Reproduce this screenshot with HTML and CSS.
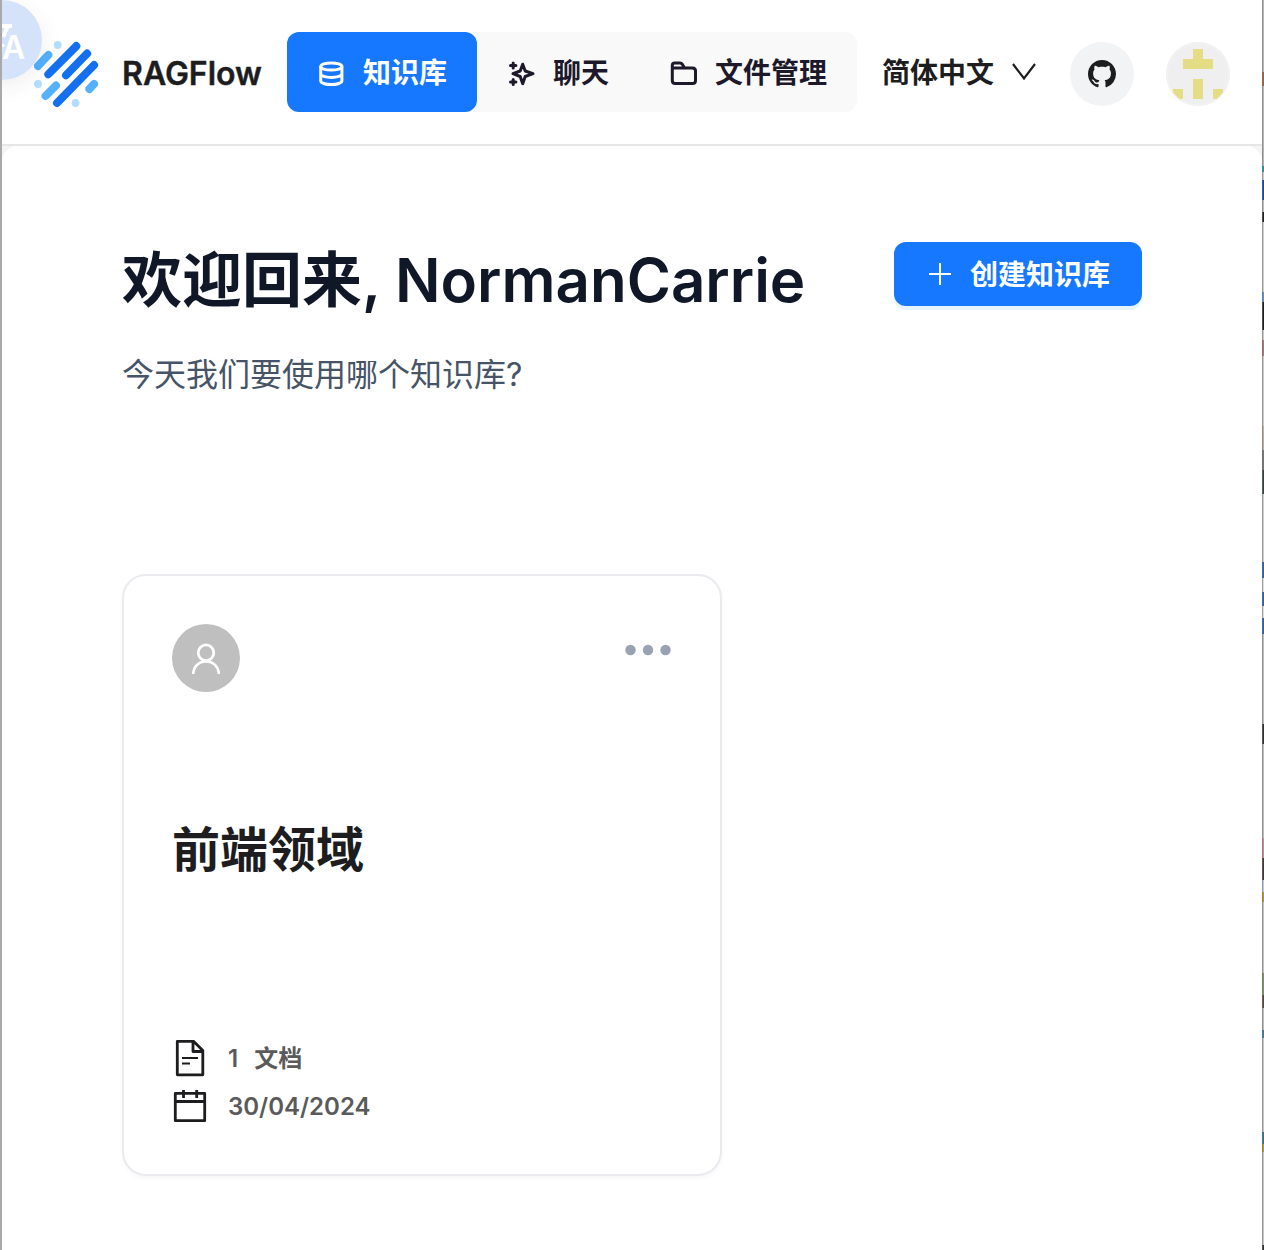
FILE: index.html
```html
<!DOCTYPE html>
<html lang="zh-CN">
<head>
<meta charset="utf-8">
<title>RAGFlow</title>
<link rel="stylesheet" href="styles.css">
</head>
<body>
<div class="window">
  <header class="header">
    <div class="brand">
      <svg class="logo" viewBox="34 40 66 68" fill="none" stroke-linecap="round" stroke-width="8">
        <g stroke="#1570ef"><path d="M48.3 74.3 76.3 46.1M66 75.3 87.1 53.5M57 103 94.1 65"/></g>
        <g stroke="#53b1fd"><path d="M38 66 48.3 55M45.500 96 56 85.500M89.400 89 94 84"/></g>
        <g fill="#b2ddff"><circle cx="57.700" cy="45" r="3.900"/><circle cx="38" cy="84" r="3.900"/><circle cx="75.600" cy="103" r="3.900"/></g>
      </svg>
      <span class="brand-name">RAGFlow</span>
    </div>
    <nav class="nav">
      <a class="nav-item nav-item-active">
        <svg class="nav-icon" viewBox="0 0 28 28" fill="none" stroke="currentColor" stroke-width="3"><ellipse cx="14.300" cy="6.500" rx="10.600" ry="3.600"/><path d="M3.700 6.500v14.200c0 2.200 4.800 3.900 10.600 3.900s10.600-1.700 10.600-3.900V6.500M3.700 13.700c0 2.200 4.800 3.800 10.600 3.800s10.600-1.600 10.600-3.800"/></svg>
        <span>知识库</span>
      </a>
      <a class="nav-item">
        <svg class="nav-icon" viewBox="0 0 28 28" fill="none" stroke="currentColor" stroke-width="3" stroke-linecap="round" stroke-linejoin="round"><path d="M15.700 4.200 18.200 11 26 13.700l-7.800 2.800-2.500 7.200-2.500-7.200-7.200-2.800 7.200-2.700zM6.200 3v5M3.500 5.500h5.400M6.200 19.500v5M3.500 22h5.400"/></svg>
        <span>聊天</span>
      </a>
      <a class="nav-item">
        <svg class="nav-icon" viewBox="0 0 28 28" fill="none" stroke="currentColor" stroke-width="3" stroke-linejoin="round"><path d="M3.300 8.200V5.500c0-1.500.9-2.400 2.400-2.400h5.200c1.200 0 2 .5 2.600 1.500l2 3.400h8c1.800 0 3 1.200 3 3v9.600c0 1.800-1.200 3-3 3H6.300c-1.800 0-3-1.200-3-3zM3.300 8h12"/></svg>
        <span>文件管理</span>
      </a>
    </nav>
    <div class="language">
      <span>简体中文</span>
      <svg class="chevron" viewBox="0 0 24 18" fill="none" stroke="currentColor" stroke-width="2.200"><path d="M1 1 12 15.500 23 1"/></svg>
    </div>
    <div class="round github">
      <svg class="github-icon" viewBox="0 0 16 16" fill="currentColor"><path d="M8 0C3.580 0 0 3.580 0 8c0 3.540 2.290 6.530 5.470 7.590.4.070.55-.17.55-.38 0-.19-.01-.82-.01-1.490-2.010.37-2.530-.49-2.690-.94-.09-.23-.48-.94-.82-1.130-.28-.15-.68-.52-.01-.53.63-.01 1.080.58 1.230.82.72 1.210 1.870.87 2.330.66.07-.52.28-.87.51-1.070-1.780-.2-3.640-.89-3.640-3.950 0-.87.31-1.590.82-2.150-.08-.2-.36-1.020.08-2.120 0 0 .67-.21 2.200.82.64-.18 1.320-.27 2-.27s1.360.09 2 .27c1.530-1.040 2.200-.82 2.200-.82.44 1.100.16 1.920.08 2.120.51.56.82 1.270.82 2.150 0 3.070-1.870 3.750-3.650 3.950.29.25.54.73.54 1.480 0 1.070-.01 1.930-.01 2.200 0 .21.15.46.55.38A8.010 8.010 0 0 0 16 8c0-4.420-3.580-8-8-8z"/></svg>
    </div>
    <div class="round avatar">
      <svg viewBox="0 0 64 64"><path fill="#e5dc86" d="M27 7h10v10h10v10H17V17h10zM27 37h10v20H27zM7 47h10v10H13.700A31 31 0 0 1 7 50.300zM47 47h10v3.300A31 31 0 0 1 50.300 57H47z"/></svg>
    </div>
  </header>
  <main class="main">
    <section class="page">
      <div class="intro">
        <div>
          <h1 class="title">欢迎回来, NormanCarrie</h1>
          <p class="subtitle">今天我们要使用哪个知识库?</p>
        </div>
        <button class="create">
          <svg class="plus" viewBox="0 0 24 24" stroke="currentColor" stroke-width="2"><path d="M12 1v22M1 12h22"/></svg>
          <span>创建知识库</span>
        </button>
      </div>
      <article class="card">
        <div class="card-top">
          <div class="user">
            <svg viewBox="0 0 34 34" fill="none" stroke="currentColor" stroke-width="2.700"><circle cx="17" cy="11.700" r="7.800"/><path d="M4.200 33c.3-7.500 5.600-12.600 12.800-12.600S29.500 25.500 29.800 33"/></svg>
          </div>
          <svg class="dots" viewBox="0 0 46 12" fill="#98a2b3"><circle cx="5.500" cy="6" r="5.200"/><circle cx="23" cy="6" r="5.200"/><circle cx="40.500" cy="6" r="5.200"/></svg>
        </div>
        <h2 class="card-title">前端领域</h2>
        <div class="meta">
          <div class="meta-row">
            <svg class="meta-icon" viewBox="0 0 36 40" fill="none" stroke="currentColor" stroke-width="2.800" stroke-linejoin="round"><path d="M5.300 3.300h16.200l9.300 9.300v24.200H5.300zM21 3.500V13.500h9.800"/><path d="M10 20h16M10 25.500h8" stroke-width="2.200"/></svg>
            <span>1</span><span class="unit">文档</span>
          </div>
          <div class="meta-row">
            <svg class="meta-icon" viewBox="0 0 36 40" fill="none" stroke="currentColor" stroke-width="2.800" stroke-linejoin="round"><path d="M3.300 7.300h29.400v27.400H3.300zM3.300 15.500h29.400M11.500 4v8M24.700 4v8"/></svg>
            <span>30/04/2024</span>
          </div>
        </div>
      </article>
    </section>
  </main>
  <div class="translate">
    <svg class="translate-mark" viewBox="0 0 42 80" fill="none" stroke="#fff" stroke-width="4"><path d="M0 26h10M5.500 27 1 37"/><path d="M0 44.500l2 2" stroke-width="3"/></svg>
    <span class="translate-letter">A</span>
  </div>
</div>
<div class="backdrop"></div>
</body>
</html>
```
FILE: styles.css
```css
* { box-sizing: border-box; }
body {
  margin: 0;
  height: 1250px;
  display: flex;
  overflow: hidden;
  font-family: Inter, "Noto Sans CJK SC", sans-serif;
  color: #1d1d1f;
}
.window {
  position: relative;
  width: 1262px;
  height: 1250px;
  display: flex;
  flex-direction: column;
  overflow: hidden;
  background: #fff;
  border-left: 2px solid #a9a9a9;
}
.backdrop {
  width: 2px;
  border-left: 1px solid rgba(110, 110, 110, .55);
  background: linear-gradient(#b5b5b5 0 72px, #a0643c 72px 86px, #b5b5b5 86px 166px, #1a9c9c 166px 172px, #ccc 172px 180px, #0c4da8 180px 200px, #bbb 200px 212px, #222 212px 222px, #ccc 222px 292px, #5b8fd0 292px 302px, #222 302px 330px, #c9c9c9 330px 340px, #a77 340px 356px, #c9c9c9 356px 426px, #b8b0a0 426px 450px, #777 450px 470px, #354545 470px 494px, #ccc 494px 562px, #2164b4 562px 578px, #ddd 578px 592px, #2164b4 592px 606px, #ddd 606px 618px, #2164b4 618px 634px, #bbb 634px 724px, #333 724px 744px, #bbb 744px 838px, #d08a90 838px 858px, #443b38 858px 880px, #bcd 880px 892px, #b99a20 892px 902px, #c2c2c2 902px 973px, #7d9468 973px 995px, #5b4a40 995px 1008px, #bbb 1008px 1030px, #3a7ca5 1030px 1038px, #c5c5c5 1038px 1132px, #2f7888 1132px 1144px, #b0a020 1144px 1152px, #c5c5c5 1152px 1245px, #333 1245px);
  background-origin: border-box;
}
.header {
  flex: none;
  display: flex;
  align-items: center;
  height: 146px;
  padding: 4px 32px 0;
  border-bottom: 2px solid #e6e6e6;
}
.brand {
  display: flex;
  align-items: center;
  gap: 22px;
  width: 253px;
}
.logo { flex: none; width: 66px; height: 68px; }
.brand-name {
  font-size: 32px;
  font-weight: 600;
  line-height: 40px;
  -webkit-text-stroke: .4px currentColor;
}
.nav {
  display: flex;
  height: 80px;
  margin-bottom: 4px;
  border-radius: 12px;
  background: #f9f9f9;
  color: #1d192b;
}
.nav-item {
  display: flex;
  align-items: center;
  gap: 18px;
  padding: 2px 30px 0;
  border-radius: 12px;
  font-size: 28px;
  font-weight: 600;
  line-height: 40px;
}
.nav-item-active { background: #1677ff; color: #fff; }
.nav-icon { width: 28px; height: 28px; margin-top: 1px; }
.language {
  display: flex;
  align-items: center;
  gap: 18px;
  width: 188px;
  margin: 0 0 2px 25px;
  font-size: 28px;
  font-weight: 600;
  line-height: 40px;
}
.chevron { width: 24px; height: 18px; margin-bottom: 2px; }
.round {
  display: flex;
  align-items: center;
  justify-content: center;
  width: 64px;
  height: 64px;
  border-radius: 50%;
}
.github { background: #f2f3f5; }
.github-icon { width: 28px; height: 28px; }
.avatar {
  margin-left: 32px;
  background: #efefef;
  box-shadow: inset 0 0 0 2px #f2f2f2;
}
.main { flex: 1; background: #f5f5f5; }
.page {
  height: 100%;
  padding: 96px 120px 0;
  border-radius: 16px 16px 0 0;
  background: #fff;
}
.intro {
  display: flex;
  justify-content: space-between;
  align-items: flex-start;
  height: 332px;
}
.title {
  margin: 0;
  font-size: 60px;
  font-weight: 600;
  line-height: 76px;
  color: #101828;
}
.subtitle {
  margin: 33px 0 0;
  font-size: 32px;
  line-height: 48px;
  color: #475467;
}
.create {
  display: flex;
  align-items: center;
  justify-content: center;
  gap: 18px;
  width: 248px;
  height: 64px;
  padding: 2px 0 0 2px;
  border: 0;
  border-radius: 12px;
  background: #1677ff;
  box-shadow: 0 4px 0 rgba(5, 145, 255, .1);
  color: #fff;
  font: 600 28px/40px Inter, "Noto Sans CJK SC", sans-serif;
}
.plus { width: 24px; height: 24px; margin-bottom: 2px; }
.card {
  display: flex;
  flex-direction: column;
  width: 600px;
  height: 602px;
  padding: 48px;
  border: 2px solid #eaeaef;
  border-radius: 24px;
  box-shadow: 0 2px 4px rgba(16, 24, 40, .04);
}
.card-top { display: flex; justify-content: space-between; }
.user {
  display: flex;
  align-items: center;
  justify-content: center;
  width: 68px;
  height: 68px;
  border-radius: 50%;
  background: #bfbfbf;
  color: #fff;
}
.user svg { width: 34px; height: 34px; }
.dots { width: 46px; height: 12px; margin-top: 20px; margin-right: 1px; }
.card-title {
  margin: 126px 0 0;
  font-size: 48px;
  font-weight: 600;
  line-height: 64px;
}
.meta {
  display: flex;
  flex-direction: column;
  gap: 8px;
  margin-top: 156px;
  color: #1d1d1f;
  font-size: 24px;
  font-weight: 600;
  line-height: 40px;
}
.meta-row { display: flex; align-items: center; height: 40px; }
.meta-row span { padding-top: 2px; color: #5a5a5a; }
.meta-icon { width: 36px; height: 40px; margin-right: 20px; }
.meta-row .unit { margin-left: 16px; }
.translate {
  position: absolute;
  left: -40px;
  top: 0;
  width: 80px;
  height: 80px;
  border-radius: 50%;
  background: #d4e3f9;
  box-shadow: 0 6px 24px rgba(0, 0, 0, .07);
  color: #fff;
}
.translate-mark { position: absolute; left: 40px; top: 0; width: 42px; height: 80px; }
.translate-letter {
  position: absolute;
  left: 40px;
  top: 28px;
  font-size: 32px;
  font-weight: 600;
  line-height: 40px;
}
```
